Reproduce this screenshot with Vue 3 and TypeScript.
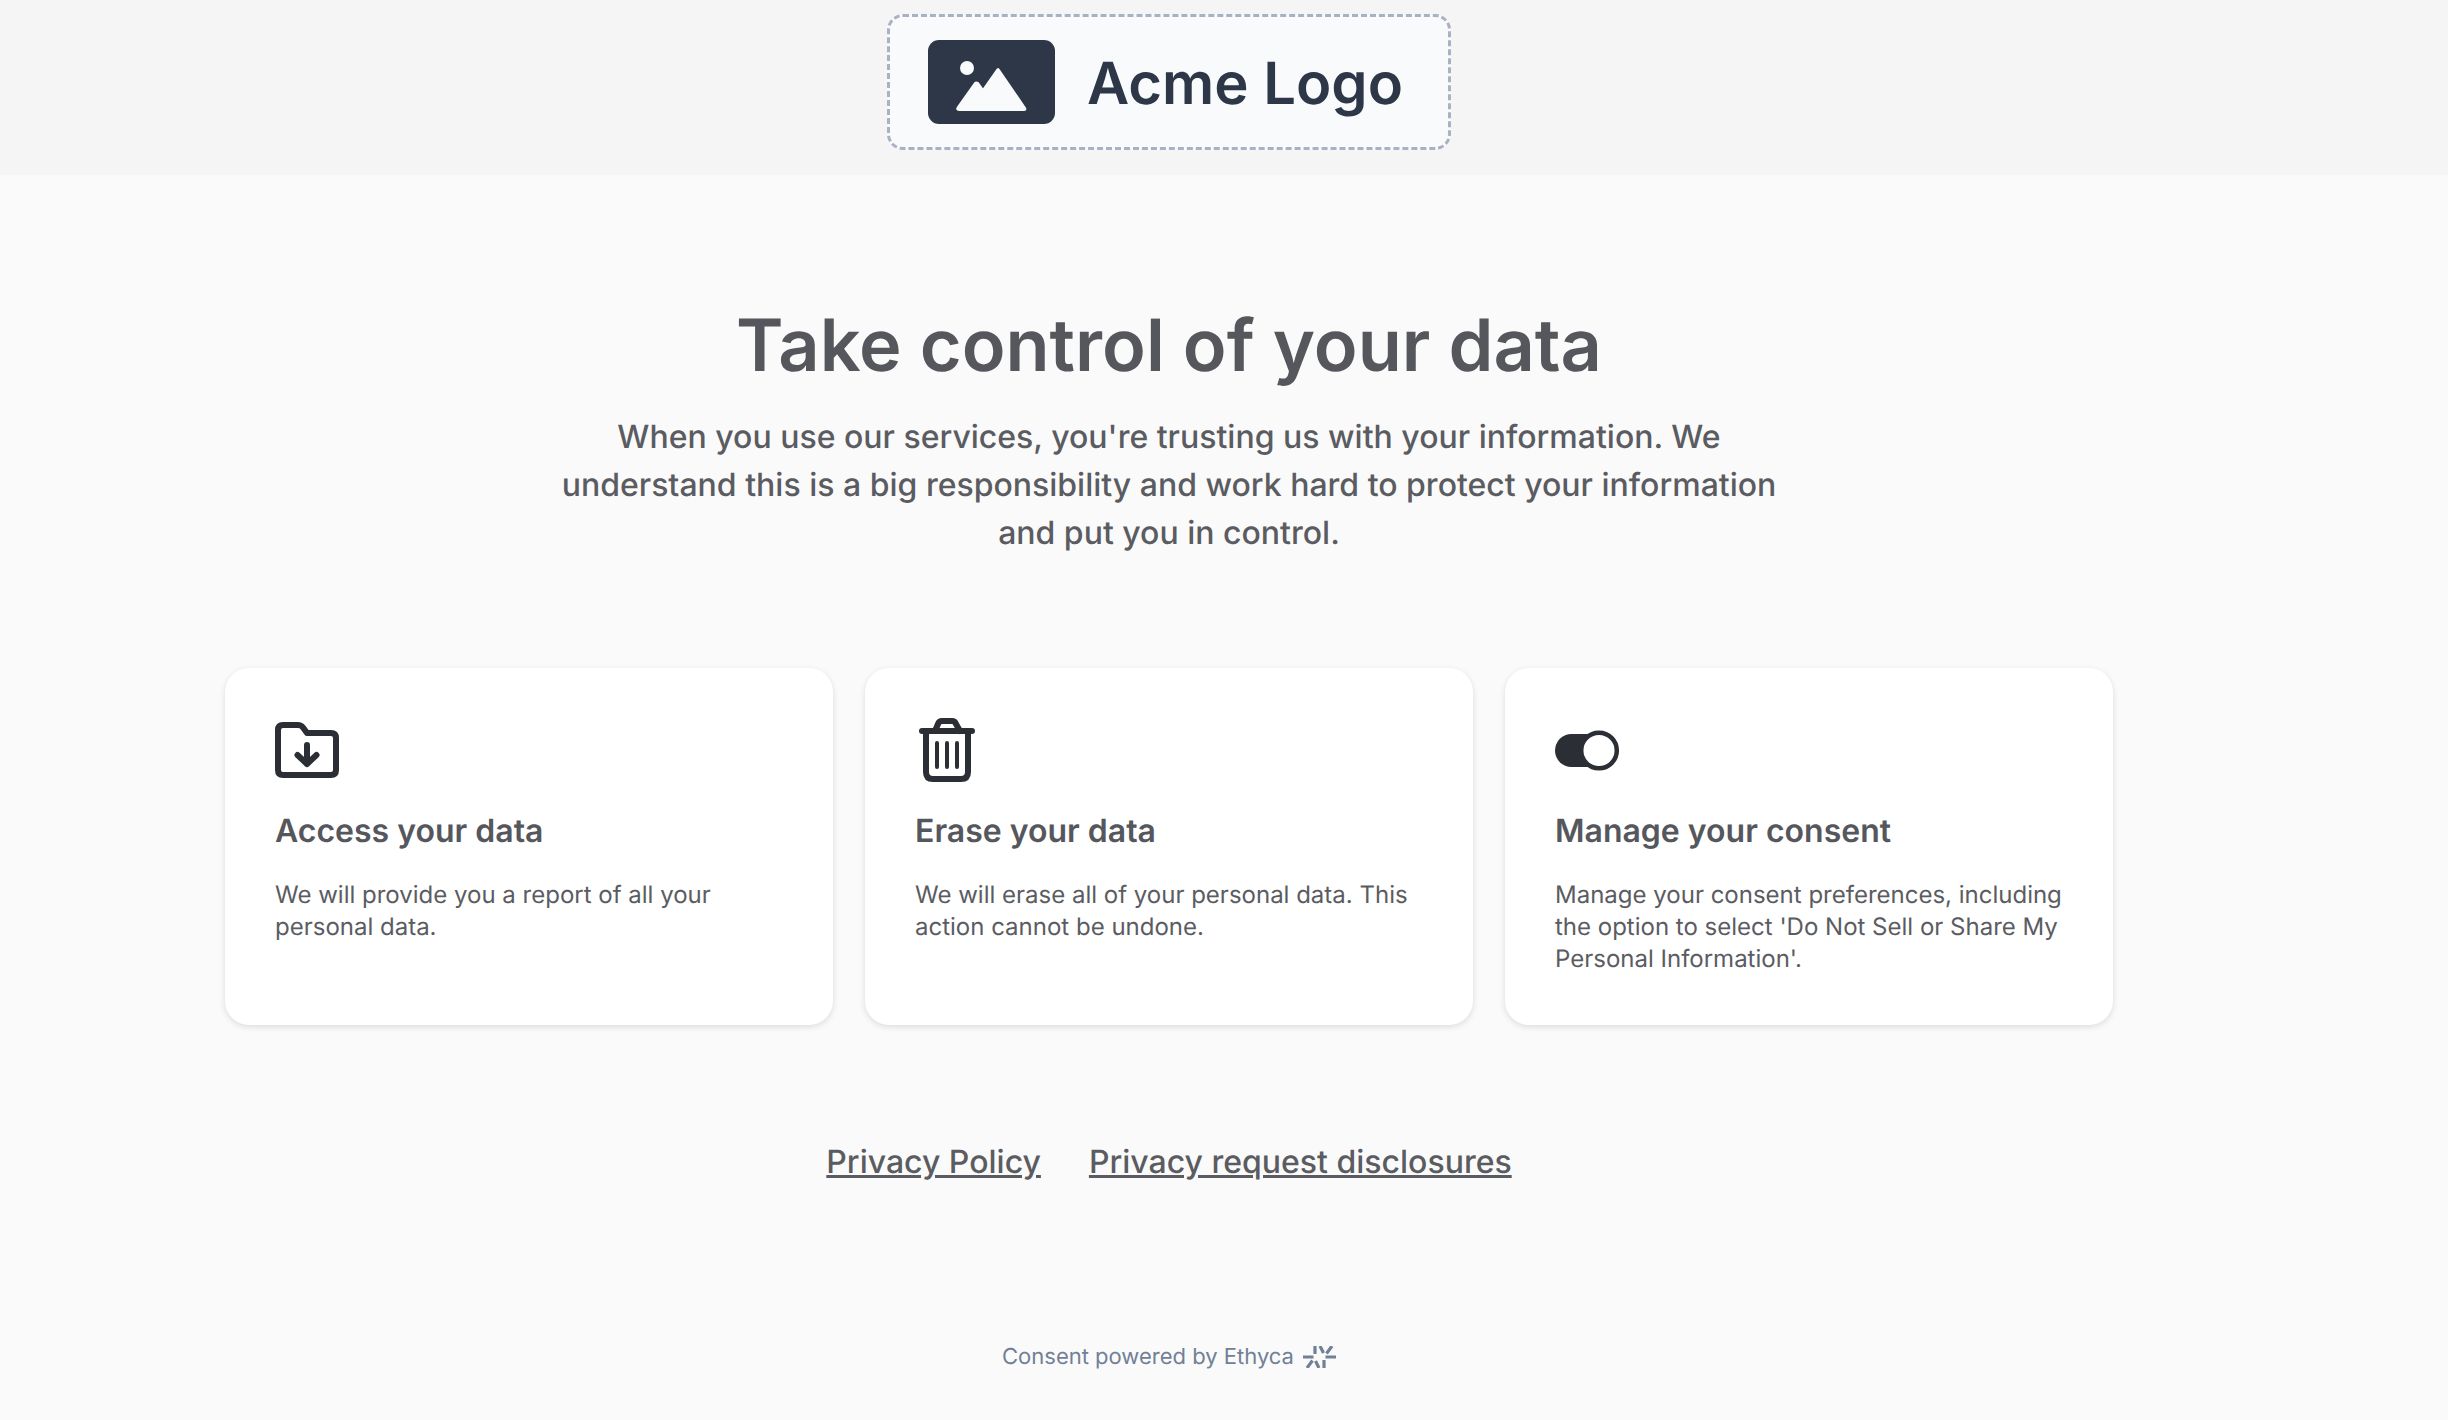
<script setup lang="ts">
interface Action {
  id: string;
  title: string;
  text: string;
}

const actions: Action[] = [
  { id: "access", title: "Access your data", text: "We will provide you a report of all your personal data." },
  { id: "erase", title: "Erase your data", text: "We will erase all of your personal data. This action cannot be undone." },
  {
    id: "consent",
    title: "Manage your consent",
    text: "Manage your consent preferences, including the option to select 'Do Not Sell or Share My Personal Information'.",
  },
];
</script>

<template>
  <div class="page">
    <header class="top">
      <div class="logo">
        <svg class="logo-mark" viewBox="0 0 127 84" aria-hidden="true">
          <rect width="127" height="84" rx="11" fill="#2d3748" />
          <circle cx="39" cy="28" r="7" fill="#f9fafc" />
          <path
            d="M71 30 L97 68 Q98 70 96 70 L31 70 Q28 70 30 67 L47 43 Q48 42 50 43 L55 50 L69 30 Q70 28 71 30 Z"
            fill="#f9fafc"
            stroke="#f9fafc"
            stroke-width="2"
            stroke-linejoin="round"
          />
        </svg>
        <span class="logo-text">Acme Logo</span>
      </div>
    </header>

    <main class="main">
      <h1 class="heading">Take control of your data</h1>
      <p class="lead">
        When you use our services, you're trusting us with your information. We understand this is a big responsibility
        and work hard to protect your information and put you in control.
      </p>

      <section class="cards">
        <article v-for="a in actions" :key="a.id" class="card">
          <svg class="icon" viewBox="0 0 64 64" aria-hidden="true">
            <g v-if="a.id === 'access'" fill="none" stroke="#2b2e35" stroke-width="6" stroke-linecap="round" stroke-linejoin="round">
              <path d="M3 11 Q3 6 8 6 L23 6 Q26 6 28 8.5 L32 14 L56 14 Q61 14 61 19 L61 51 Q61 56 56 56 L8 56 Q3 56 3 51 Z" />
              <path d="M32 26 L32 45 M22.5 36 L32 45 L41.5 36" />
            </g>
            <g v-else-if="a.id === 'erase'" fill="none" stroke="#2b2e35" stroke-linecap="round" stroke-linejoin="round">
              <path stroke-width="6" d="M7 12 L57 12 M11 12 L11 53 Q11 60 18 60 L46 60 Q53 60 53 53 L53 12" />
              <path stroke-width="6" d="M20 12 L23 5 Q24 2 27 2 L37 2 Q40 2 41 5 L45 12" />
              <path stroke-width="4" d="M22 24 L22 48 M32 24 L32 48 M42 24 L42 48" />
            </g>
            <g v-else>
              <rect x="0" y="15" width="50" height="33" rx="16.5" fill="#2b2e35" />
              <circle cx="44" cy="31.5" r="17.8" fill="#fff" stroke="#2b2e35" stroke-width="4.5" />
            </g>
          </svg>
          <h2 class="card-title">{{ a.title }}</h2>
          <p class="card-text">{{ a.text }}</p>
        </article>
      </section>

      <nav class="links">
        <a class="link" href="#">Privacy Policy</a>
        <a class="link" href="#">Privacy request disclosures</a>
      </nav>

      <footer class="powered">
        <span>Consent powered by Ethyca</span>
        <svg class="ethyca" viewBox="0 0 33 22" aria-hidden="true">
          <path
            d="M0 11 L10.5 11 M22.5 11 L33 11 M12 0 L12 8 M21 22 L21 14 M17 0 L20.5 7 M16 22 L12.5 15 M29 0 L23.5 7.5 M4 22 L9.5 14.5"
            fill="none"
            stroke="#718096"
            stroke-width="3.2"
          />
        </svg>
      </footer>
    </main>
  </div>
</template>

<style scoped>
.page {
  display: flex;
  flex-direction: column;
  min-height: 1420px;
  font-family: Inter, "Liberation Sans", sans-serif;
  color: #55575d;
  text-rendering: geometricPrecision;
}

.top {
  display: flex;
  justify-content: center;
  align-items: flex-start;
  box-sizing: border-box;
  height: 175px;
  padding: 14px 110px 0 0;
  background: #f5f5f5;
}

.logo {
  display: flex;
  align-items: center;
  box-sizing: border-box;
  width: 564px;
  height: 136px;
  padding-left: 38px;
  background: #f9fafc;
  border: 3px dashed #a9b2c3;
  border-radius: 16px;
}

.logo-mark {
  width: 127px;
  height: 84px;
  flex: none;
}

.logo-text {
  margin: 2px 0 0 32px;
  font-size: 58px;
  font-weight: 600;
  color: #2d3748;
  white-space: nowrap;
}

.main {
  display: flex;
  flex-direction: column;
  align-items: center;
  padding: 0 335px 0 225px;
}

.heading {
  margin: 131px 0 0;
  font-size: 72px;
  line-height: 80px;
  font-weight: 600;
}

.lead {
  width: 1240px;
  margin: 27px 0 0;
  font-size: 32px;
  line-height: 48px;
  font-weight: 500;
  color: #5a5c62;
  text-align: center;
}

.cards {
  display: grid;
  grid-template-columns: repeat(3, 608px);
  gap: 32px;
  margin-top: 111px;
}

.card {
  box-sizing: border-box;
  height: 357px;
  padding: 51px 50px 50px;
  background: #fff;
  border-radius: 24px;
  box-shadow: 0 2px 6px rgba(0, 0, 0, 0.12);
}

.icon {
  display: block;
  width: 64px;
  height: 64px;
  overflow: visible;
}

.card-title {
  margin: 24px 0 0;
  font-size: 32px;
  line-height: 48px;
  font-weight: 600;
}

.card-text {
  margin: 24px 0 0;
  font-size: 24px;
  line-height: 32px;
  font-weight: 400;
  color: #5a5c62;
}

.links {
  display: flex;
  gap: 48px;
  margin-top: 113px;
}

.link {
  font-size: 32px;
  line-height: 48px;
  font-weight: 500;
  color: #5a5c62;
  text-decoration: underline;
}

.powered {
  display: flex;
  align-items: center;
  gap: 9px;
  margin-top: 155px;
  font-size: 22px;
  line-height: 32px;
  color: #718096;
}

.ethyca {
  width: 33px;
  height: 22px;
  flex: none;
}
</style>

<style>
body {
  background: #fafafa;
}
</style>
